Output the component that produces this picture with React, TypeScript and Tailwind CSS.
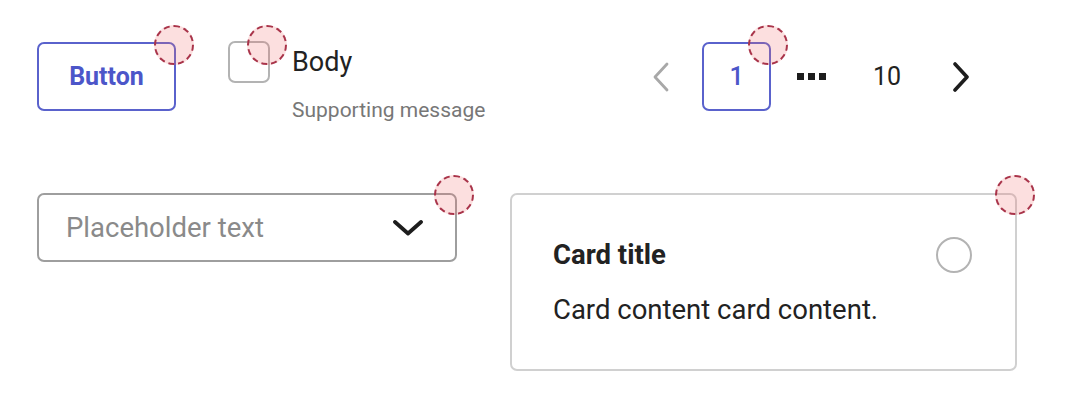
import * as React from "react";

// annotation marker: dashed pink dot sitting on a component's top-right corner
function Marker({ className }: { className: string }) {
  return (
    <span
      className={`pointer-events-none absolute h-[40px] w-[40px] rounded-full border-2 border-dashed border-[#a9344a] bg-[rgba(240,110,110,0.22)] ${className}`}
    />
  );
}

function Chevron({ dir, className }: { dir: "left" | "right" | "down"; className: string }) {
  if (dir === "down")
    return (
      <svg width="30" height="16" viewBox="0 0 30 16" fill="none" className={className}>
        <polyline points="2,2 15,13.5 28,2" stroke="currentColor" strokeWidth="3.8" strokeLinecap="round" strokeLinejoin="round" />
      </svg>
    );
  return (
    <svg width="18" height="30" viewBox="0 0 18 30" fill="none" className={className}>
      <polyline
        points={dir === "left" ? "15,2 3,15 15,28" : "3,2 15,15 3,28"}
        stroke="currentColor"
        strokeWidth={dir === "left" ? 2.8 : 3.6}
        strokeLinecap="round"
        strokeLinejoin="round"
      />
    </svg>
  );
}

export default function App() {
  return (
    <div className="min-h-[415px] w-[1080px] bg-white pl-[37px] pt-[41px] font-['Roboto',sans-serif] text-[#222]">
      {/* row 1: button, checkbox, pagination */}
      <div className="flex items-start">
        <div className="relative mt-px">
          <button className="flex h-[69px] w-[139px] items-center justify-center rounded-[7px] border-2 border-[#5a62cc] text-[25px] font-bold text-[#4c56c9]">
            Button
          </button>
          <Marker className="-right-[18px] -top-[17px]" />
        </div>

        <div className="ml-[52px] flex w-[424px] gap-[22px]">
          <div className="relative h-[42px] w-[42px] shrink-0">
            <span className="block h-full w-full rounded-[7px] border-2 border-[#b3b3b3]" />
            <Marker className="-right-[17px] -top-[16px]" />
          </div>
          <div>
            <div className="text-[27px] leading-[42px]">Body</div>
            <div className="mt-[16px] text-[21px] leading-[22px] text-[#777]">Supporting message</div>
          </div>
        </div>

        <nav className="mt-px flex h-[69px] items-center">
          <Chevron dir="left" className="text-[#a8a8a8]" />
          <div className="relative ml-[32px]">
            <span className="flex h-[69px] w-[69px] items-center justify-center rounded-[7px] border-2 border-[#5a62cc] text-[25px] font-medium text-[#4c56c9]">
              1
            </span>
            <Marker className="-right-[17px] -top-[17px]" />
          </div>
          <span className="ml-[26px] flex gap-[4px]">
            <i className="block h-[7px] w-[7px] bg-[#1d1d1d]" />
            <i className="block h-[7px] w-[7px] bg-[#1d1d1d]" />
            <i className="block h-[7px] w-[7px] bg-[#1d1d1d]" />
          </span>
          <span className="ml-[47px] text-[25px]">10</span>
          <Chevron dir="right" className="ml-[51px] text-[#1d1d1d]" />
        </nav>
      </div>

      {/* row 2: select, card */}
      <div className="mt-[72px] flex items-start gap-[53px]">
        <div className="relative">
          <div className="flex h-[69px] w-[420px] items-center justify-between rounded-[7px] border-2 border-[#9e9e9e] pl-[27px] pr-[32px]">
            <span className="text-[27.5px] text-[#8a8a8a]">Placeholder text</span>
            <Chevron dir="down" className="text-[#1d1d1d]" />
          </div>
          <Marker className="-right-[17px] -top-[18px]" />
        </div>

        <div className="relative">
          <div className="h-[178px] w-[507px] rounded-[7px] border-2 border-[#d0d0d0] pl-[41px] pr-[43px] pt-[42px]">
            <div className="flex h-[36px] items-center justify-between">
              <span className="text-[27.5px] font-bold">Card title</span>
              <span className="h-[36px] w-[36px] rounded-full border-2 border-[#b3b3b3]" />
            </div>
            <p className="mt-[22px] text-[27.5px] leading-[30px]">Card content card content.</p>
          </div>
          <Marker className="-right-[18px] -top-[18px]" />
        </div>
      </div>
    </div>
  );
}
